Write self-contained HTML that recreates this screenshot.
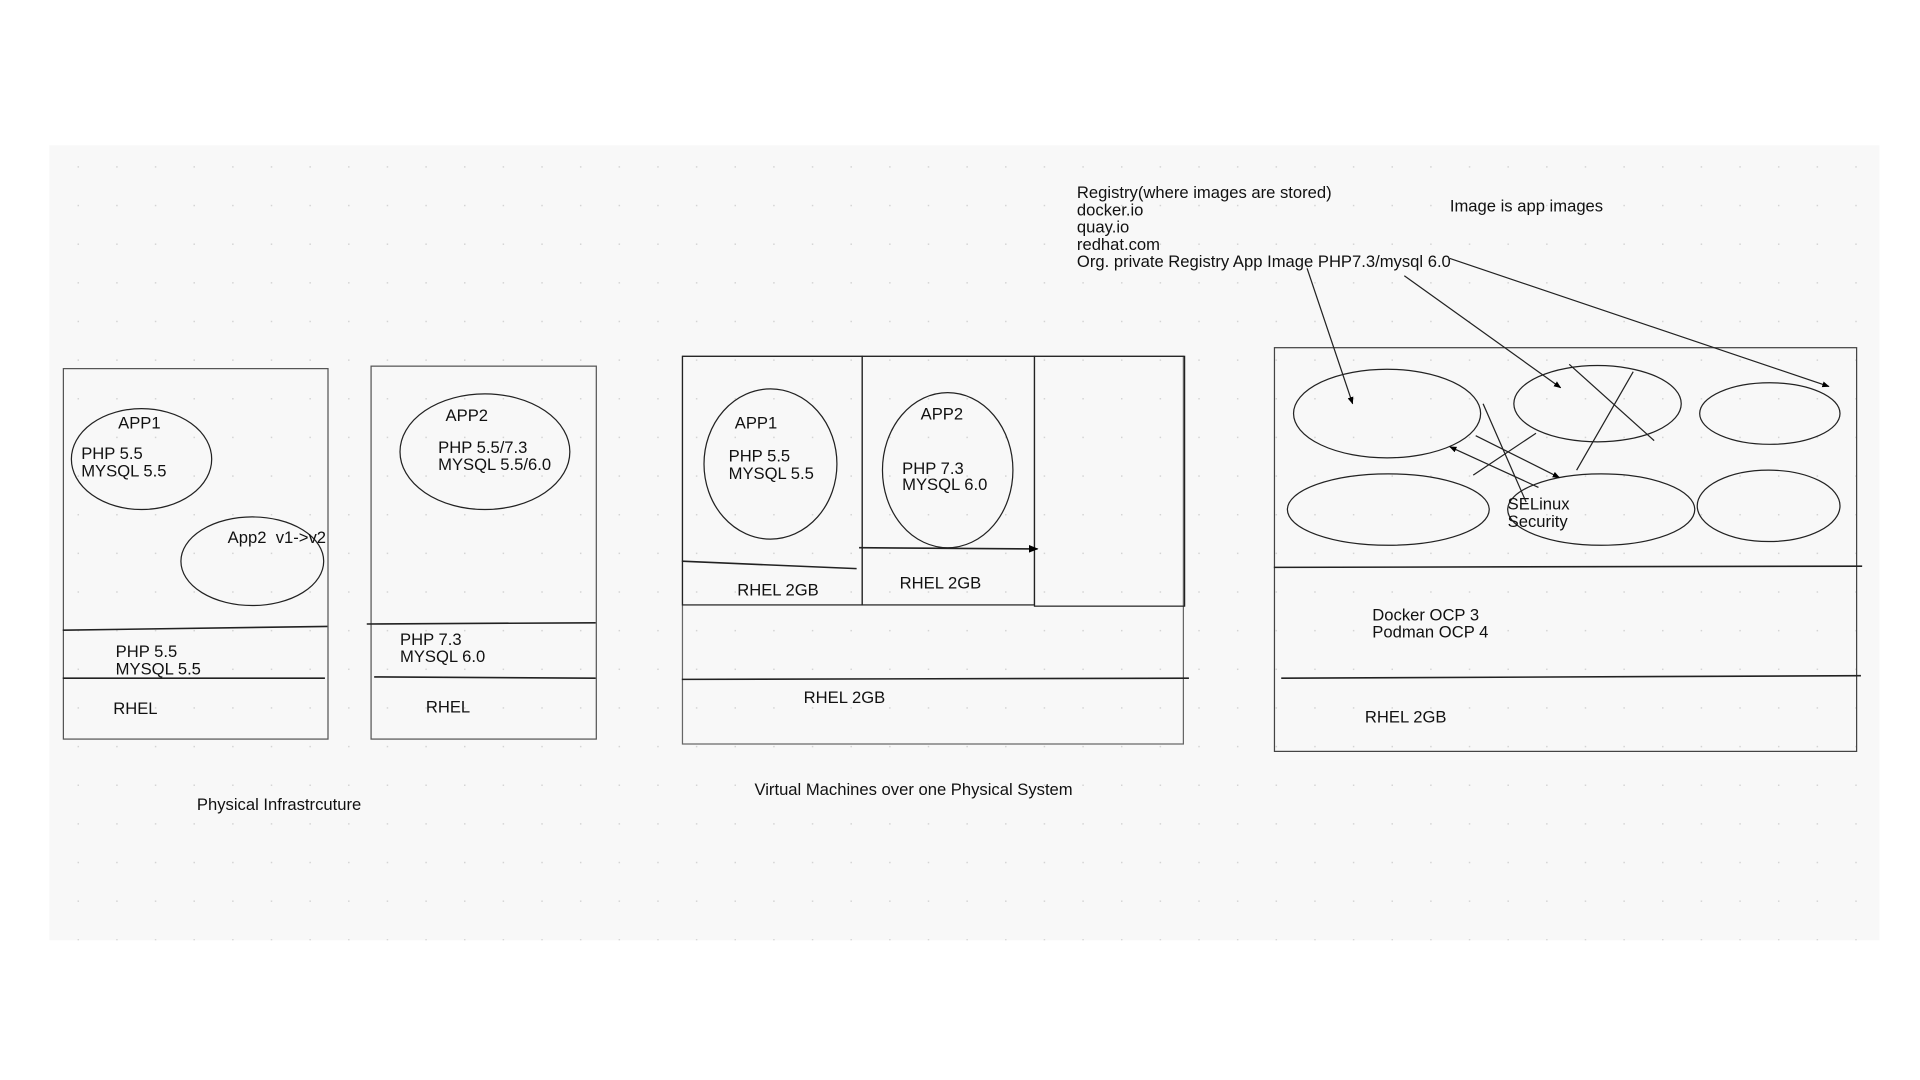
<!DOCTYPE html>
<html><head><meta charset="utf-8"><style>
html,body{margin:0;padding:0;background:#fff;width:1920px;height:1080px;overflow:hidden}
svg{display:block}
text{font-family:"Liberation Sans",sans-serif;font-size:13.5px;fill:#111}
</style></head><body>
<svg width="1920" height="1080" viewBox="0 0 1560 877.5" xmlns="http://www.w3.org/2000/svg">
<defs>
<pattern id="d" x="63" y="135" width="31.4" height="31.4" patternUnits="userSpaceOnUse">
<rect x="0" y="0" width="1.2" height="1.2" fill="#d4d4d4"/>
</pattern>
<marker id="a" viewBox="0 0 10 10" refX="9" refY="5" markerWidth="6" markerHeight="6" orient="auto"><path d="M0,1 L10,5 L0,9 z" fill="#000"/></marker>
</defs>
<rect x="40" y="118" width="1487" height="646" fill="#f8f8f8"/>
<rect x="40" y="118" width="1487" height="646" fill="url(#d)"/>
<g fill="none" stroke="#222" stroke-width="1">
<rect x="51.5" y="299.5" width="215" height="301" stroke="#555"/>
<line x1="51" y1="512" x2="266" y2="509" stroke-width="1.3"/>
<line x1="51" y1="551" x2="264" y2="551" stroke-width="1.3"/>
<ellipse cx="115" cy="373" rx="57" ry="41"/>
<ellipse cx="205" cy="456" rx="58" ry="36"/>
<rect x="301.5" y="297.5" width="183" height="303" stroke="#555"/>
<line x1="298" y1="507" x2="484" y2="506" stroke-width="1.3"/>
<line x1="304" y1="550" x2="484" y2="551" stroke-width="1.3"/>
<ellipse cx="394" cy="367" rx="69" ry="47"/>
<rect x="554.5" y="289.5" width="407" height="315" stroke="#666"/>
<rect x="554.5" y="289.5" width="146" height="202"/>
<rect x="700.5" y="289.5" width="140" height="202"/>
<rect x="840.5" y="289.5" width="122" height="203"/>
<line x1="554" y1="456" x2="696" y2="462" stroke-width="1.3"/>
<line x1="698" y1="445" x2="843" y2="446" stroke-width="1.3" marker-end="url(#a)"/>
<line x1="554" y1="552" x2="966" y2="551" stroke-width="1.3"/>
<ellipse cx="626" cy="377" rx="54" ry="61"/>
<ellipse cx="770" cy="382" rx="53" ry="63"/>
<rect x="1035.5" y="282.5" width="473" height="328" stroke="#444"/>
<line x1="1035" y1="461" x2="1513" y2="460" stroke-width="1.3"/>
<line x1="1041" y1="551" x2="1512" y2="549" stroke-width="1.3"/>
<ellipse cx="1127" cy="336" rx="76" ry="36"/>
<ellipse cx="1298" cy="328" rx="68" ry="31"/>
<ellipse cx="1438" cy="336" rx="57" ry="25"/>
<ellipse cx="1128" cy="414" rx="82" ry="29"/>
<ellipse cx="1301" cy="414" rx="76" ry="29"/>
<ellipse cx="1437" cy="411" rx="58" ry="29"/>
<line x1="1062" y1="218" x2="1099" y2="328" marker-end="url(#a)"/>
<line x1="1141" y1="224" x2="1268" y2="315" marker-end="url(#a)"/>
<line x1="1178" y1="210" x2="1486" y2="314" marker-end="url(#a)"/>
<line x1="1275" y1="296" x2="1344" y2="358"/>
<line x1="1327" y1="302" x2="1281" y2="382"/>
<line x1="1205" y1="328" x2="1240" y2="408"/>
<line x1="1248" y1="352" x2="1197" y2="386"/>
<line x1="1199" y1="354" x2="1267" y2="388" marker-end="url(#a)"/>
<line x1="1250" y1="396" x2="1178" y2="363" marker-end="url(#a)"/>
</g>
<text x="96" y="348">APP1</text>
<text x="66" y="373">PHP 5.5</text>
<text x="66" y="387">MYSQL 5.5</text>
<text x="185" y="441">App2&#160; v1-&gt;v2</text>
<text x="94" y="534">PHP 5.5</text>
<text x="94" y="548">MYSQL 5.5</text>
<text x="92" y="580">RHEL</text>
<text x="160" y="658">Physical Infrastrcuture</text>
<text x="362" y="342">APP2</text>
<text x="356" y="368">PHP 5.5/7.3</text>
<text x="356" y="382">MYSQL 5.5/6.0</text>
<text x="325" y="524">PHP 7.3</text>
<text x="325" y="538">MYSQL 6.0</text>
<text x="346" y="579">RHEL</text>
<text x="597" y="348">APP1</text>
<text x="592" y="375">PHP 5.5</text>
<text x="592" y="389">MYSQL 5.5</text>
<text x="748" y="341">APP2</text>
<text x="733" y="385">PHP 7.3</text>
<text x="733" y="398">MYSQL 6.0</text>
<text x="599" y="484">RHEL 2GB</text>
<text x="731" y="478">RHEL 2GB</text>
<text x="653" y="571">RHEL 2GB</text>
<text x="613" y="646">Virtual Machines over one Physical System</text>
<text x="875" y="161">Registry(where images are stored)</text>
<text x="875" y="175">docker.io</text>
<text x="875" y="189">quay.io</text>
<text x="875" y="203">redhat.com</text>
<text x="875" y="217">Org. private Registry App Image PHP7.3/mysql 6.0</text>
<text x="1178" y="172">Image is app images</text>
<text x="1225" y="414">SELinux</text>
<text x="1225" y="428">Security</text>
<text x="1115" y="504">Docker OCP 3</text>
<text x="1115" y="518">Podman OCP 4</text>
<text x="1109" y="587">RHEL 2GB</text>
</svg>
</body></html>
